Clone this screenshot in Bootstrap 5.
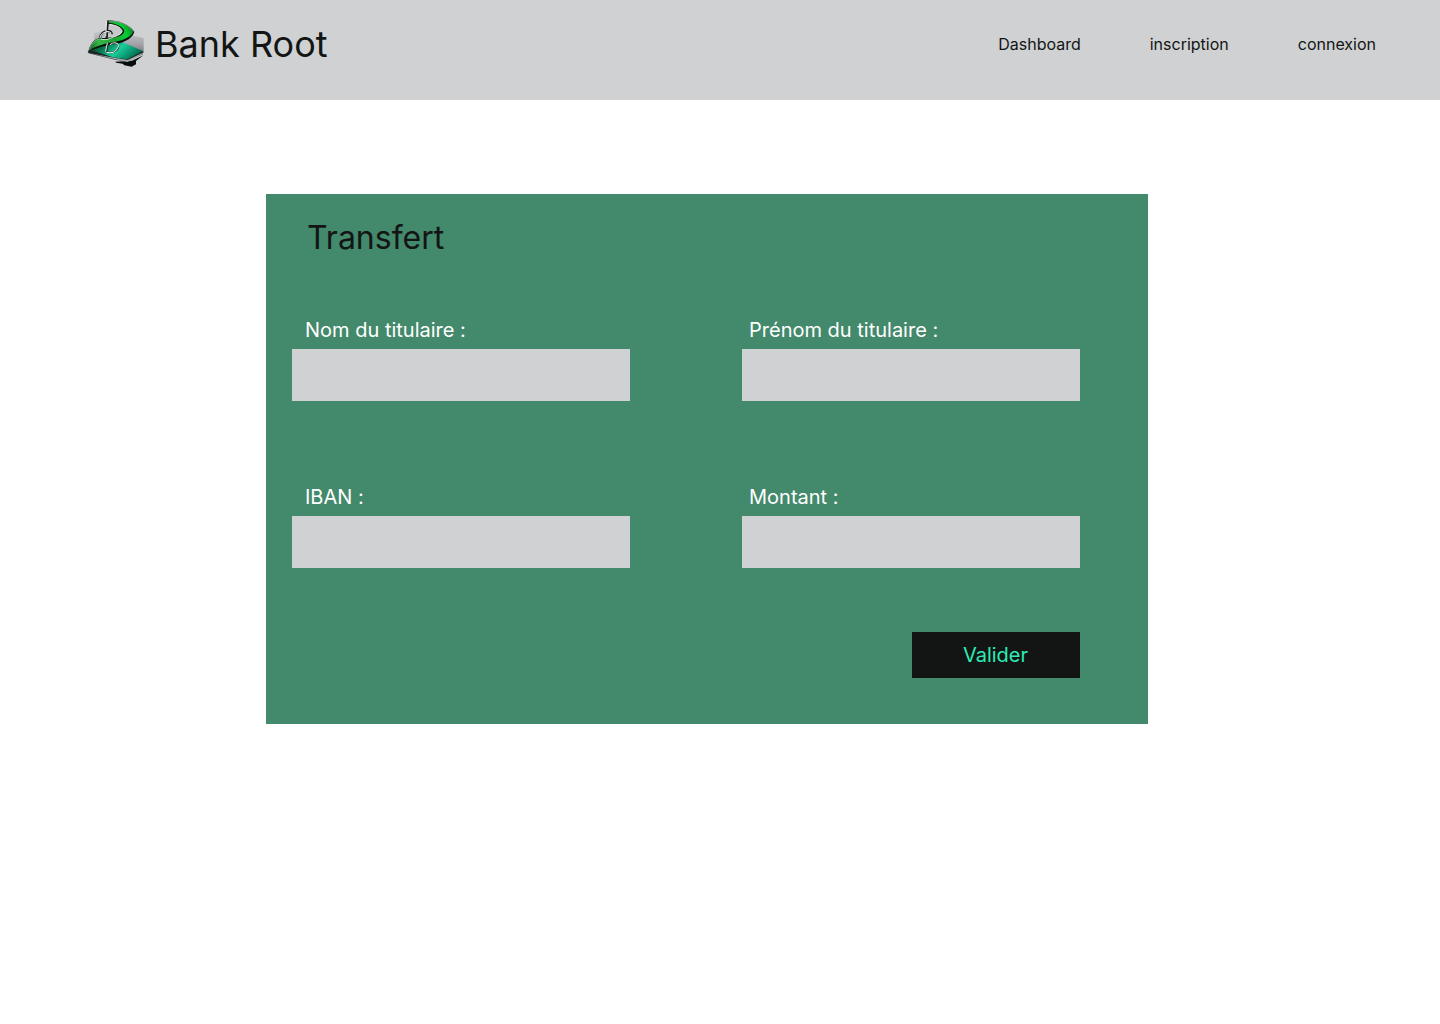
<!DOCTYPE html>
<html lang="fr">
<head>
<meta charset="utf-8">
<meta name="viewport" content="width=device-width, initial-scale=1">
<title>Bank Root - Transfert</title>
<link href="https://cdn.jsdelivr.net/npm/bootstrap@5.3.0/dist/css/bootstrap.min.css" rel="stylesheet">
<style>
body{font-family:Inter,sans-serif;font-feature-settings:"calt" 0;color:#131515;background:#fff}
.topbar{height:100px;background:#d0d1d3;padding:0 64px 0 80px}
.brand-row{padding-top:12px}
.brand-logo{width:72px;height:64px;display:block}
.brand-name{font-size:36px;line-height:64px;margin-left:3px;font-weight:400;color:#131515}
.menu{gap:69px;padding-top:32px}
.menu .nav-link{color:#131515;font-size:16px;line-height:24px;padding:0}
.transfer{width:882px;height:530px;margin:94px 0 0 266px;background:#43896b;padding:22px 68px 46px 26px}
.transfer-title{font-size:32px;line-height:44px;font-weight:400;margin:0 0 58px 15px}
.fields{gap:84px 112px}
.field-box{width:338px}
.field-box .form-label{color:#fff;font-size:20px;line-height:24px;margin:0 0 7px 13px;display:block}
.field-box.second .form-label{margin-left:7px}
.field-box .form-control{height:52px;background:#d0d1d3;border:0;border-radius:0}
.btn-valid{width:168px;height:46px;background:#131515;color:#2beeb4;font-size:20px;line-height:24px;border:0;border-radius:0;padding:0 1px 0 0;margin-top:64px}
.btn-valid:hover{background:#222;color:#2beeb4}
</style>
</head>
<body>
<header class="topbar d-flex justify-content-between align-items-start">
  <a class="brand-row d-flex text-decoration-none" href="#">
    <svg class="brand-logo" viewBox="0 0 216 192" aria-hidden="true">
      <defs>
        <linearGradient id="shade" x1="0" y1="0" x2="0" y2="1"><stop offset="0" stop-color="#c8c9cc"/><stop offset=".6" stop-color="#a3a3aa"/><stop offset="1" stop-color="#7c7c84"/></linearGradient>
        <linearGradient id="note" x1="0" y1=".2" x2="1" y2=".6"><stop offset="0" stop-color="#063d2b"/><stop offset=".28" stop-color="#087850"/><stop offset=".55" stop-color="#18ce9b"/><stop offset="1" stop-color="#00644b"/></linearGradient>
        <linearGradient id="ribbon" x1="26" y1="115" x2="162" y2="50" gradientUnits="userSpaceOnUse"><stop offset="0" stop-color="#0d5a1c"/><stop offset=".25" stop-color="#35b845"/><stop offset=".55" stop-color="#1fa034"/><stop offset=".8" stop-color="#05d034"/><stop offset="1" stop-color="#087b27"/></linearGradient>
        <filter id="soft" x="-10%" y="-10%" width="120%" height="120%"><feGaussianBlur stdDeviation="2"/></filter>
      </defs>
      <path d="M42 62L82 56 137 66 191 78V122L140 112 43 105z" fill="url(#shade)" filter="url(#soft)"/>
      <path d="M106 149L156 146 190 130 168 147 168 157 155 164 133 160 128 155 108 152z" fill="#090c0d"/>
      <path d="M23 119Q72 96 117 90L190 119 188 127 143 148 108 144 26 124z" fill="#1b2624"/>
      <path d="M34 115Q72 96 117 86L189 117 142 142 99 136z" fill="url(#note)"/>
      <path d="M24 122L77 133 143 144 188 122 188 126 143 150 92 139z" fill="#a4adaf"/>
      <path d="M87 39Q125 43 126 61 122 74 90 79L62 82 76 70 89 59z" fill="#c6c8ca"/>
      <path d="M84 25C115 25 145 35 163 59 157 84 122 94 99 97 68 102 45 110 25 119 29 96 43 80 62 77 77 79 119 77 127 60 125 47 106 38 84 36z" fill="#07110a"/>
      <path d="M84 28C117 28 144 37 160 59 151 78 120 87 97 91 66 96 44 105 29 115 31 97 44 82 62 79 72 84 83 82 91 79 119 75 136 66 132 54 125 41 105 34 84 32z" fill="url(#ribbon)"/>
      <path d="M84 27C117 27 144 36 161 58" fill="none" stroke="#c1cec1" stroke-width="2"/>
      <path d="M89 37C112 40 128 49 126 59 122 69 105 73 91 79 80 84 71 84 62 81" fill="none" stroke="#f1f4f1" stroke-width="2.6"/>
      <path d="M28 114Q34 87 61 79" fill="none" stroke="#a8c3ac" stroke-width="2"/>
      <g fill="none" stroke-linecap="round">
        <path d="M83 29L80 75M95 64Q91 54 77 58 64 62 60 76" stroke="#151b19" stroke-width="7"/>
        <path d="M84 93L80 119Q98 126 110 115 121 103 111 95" stroke="#14231e" stroke-width="4"/>
        <path d="M80 27L77 72M93 67Q94 58 80 59 64 62 60 77M82 93L77 117M80 121Q98 126 109 114 120 101 112 95 103 89 91 97" stroke="#e5e8e7" stroke-width="3.2"/>
      </g>
    </svg>
    <span class="brand-name">Bank Root</span>
  </a>
  <nav class="menu nav">
    <a class="nav-link" href="#">Dashboard</a>
    <a class="nav-link" href="#">inscription</a>
    <a class="nav-link" href="#">connexion</a>
  </nav>
</header>
<main>
  <form class="transfer">
    <h1 class="transfer-title">Transfert</h1>
    <div class="fields d-flex flex-wrap">
      <div class="field-box"><label class="form-label" for="nom">Nom du titulaire :</label><input class="form-control" id="nom" type="text"></div>
      <div class="field-box second"><label class="form-label" for="prenom">Prénom du titulaire :</label><input class="form-control" id="prenom" type="text"></div>
      <div class="field-box"><label class="form-label" for="iban">IBAN :</label><input class="form-control" id="iban" type="text"></div>
      <div class="field-box second"><label class="form-label" for="montant">Montant :</label><input class="form-control" id="montant" type="text"></div>
    </div>
    <div class="d-flex justify-content-end"><button class="btn btn-valid" type="button">Valider</button></div>
  </form>
</main>
<script src="https://cdn.jsdelivr.net/npm/bootstrap@5.3.0/dist/js/bootstrap.bundle.min.js"></script>
</body>
</html>
